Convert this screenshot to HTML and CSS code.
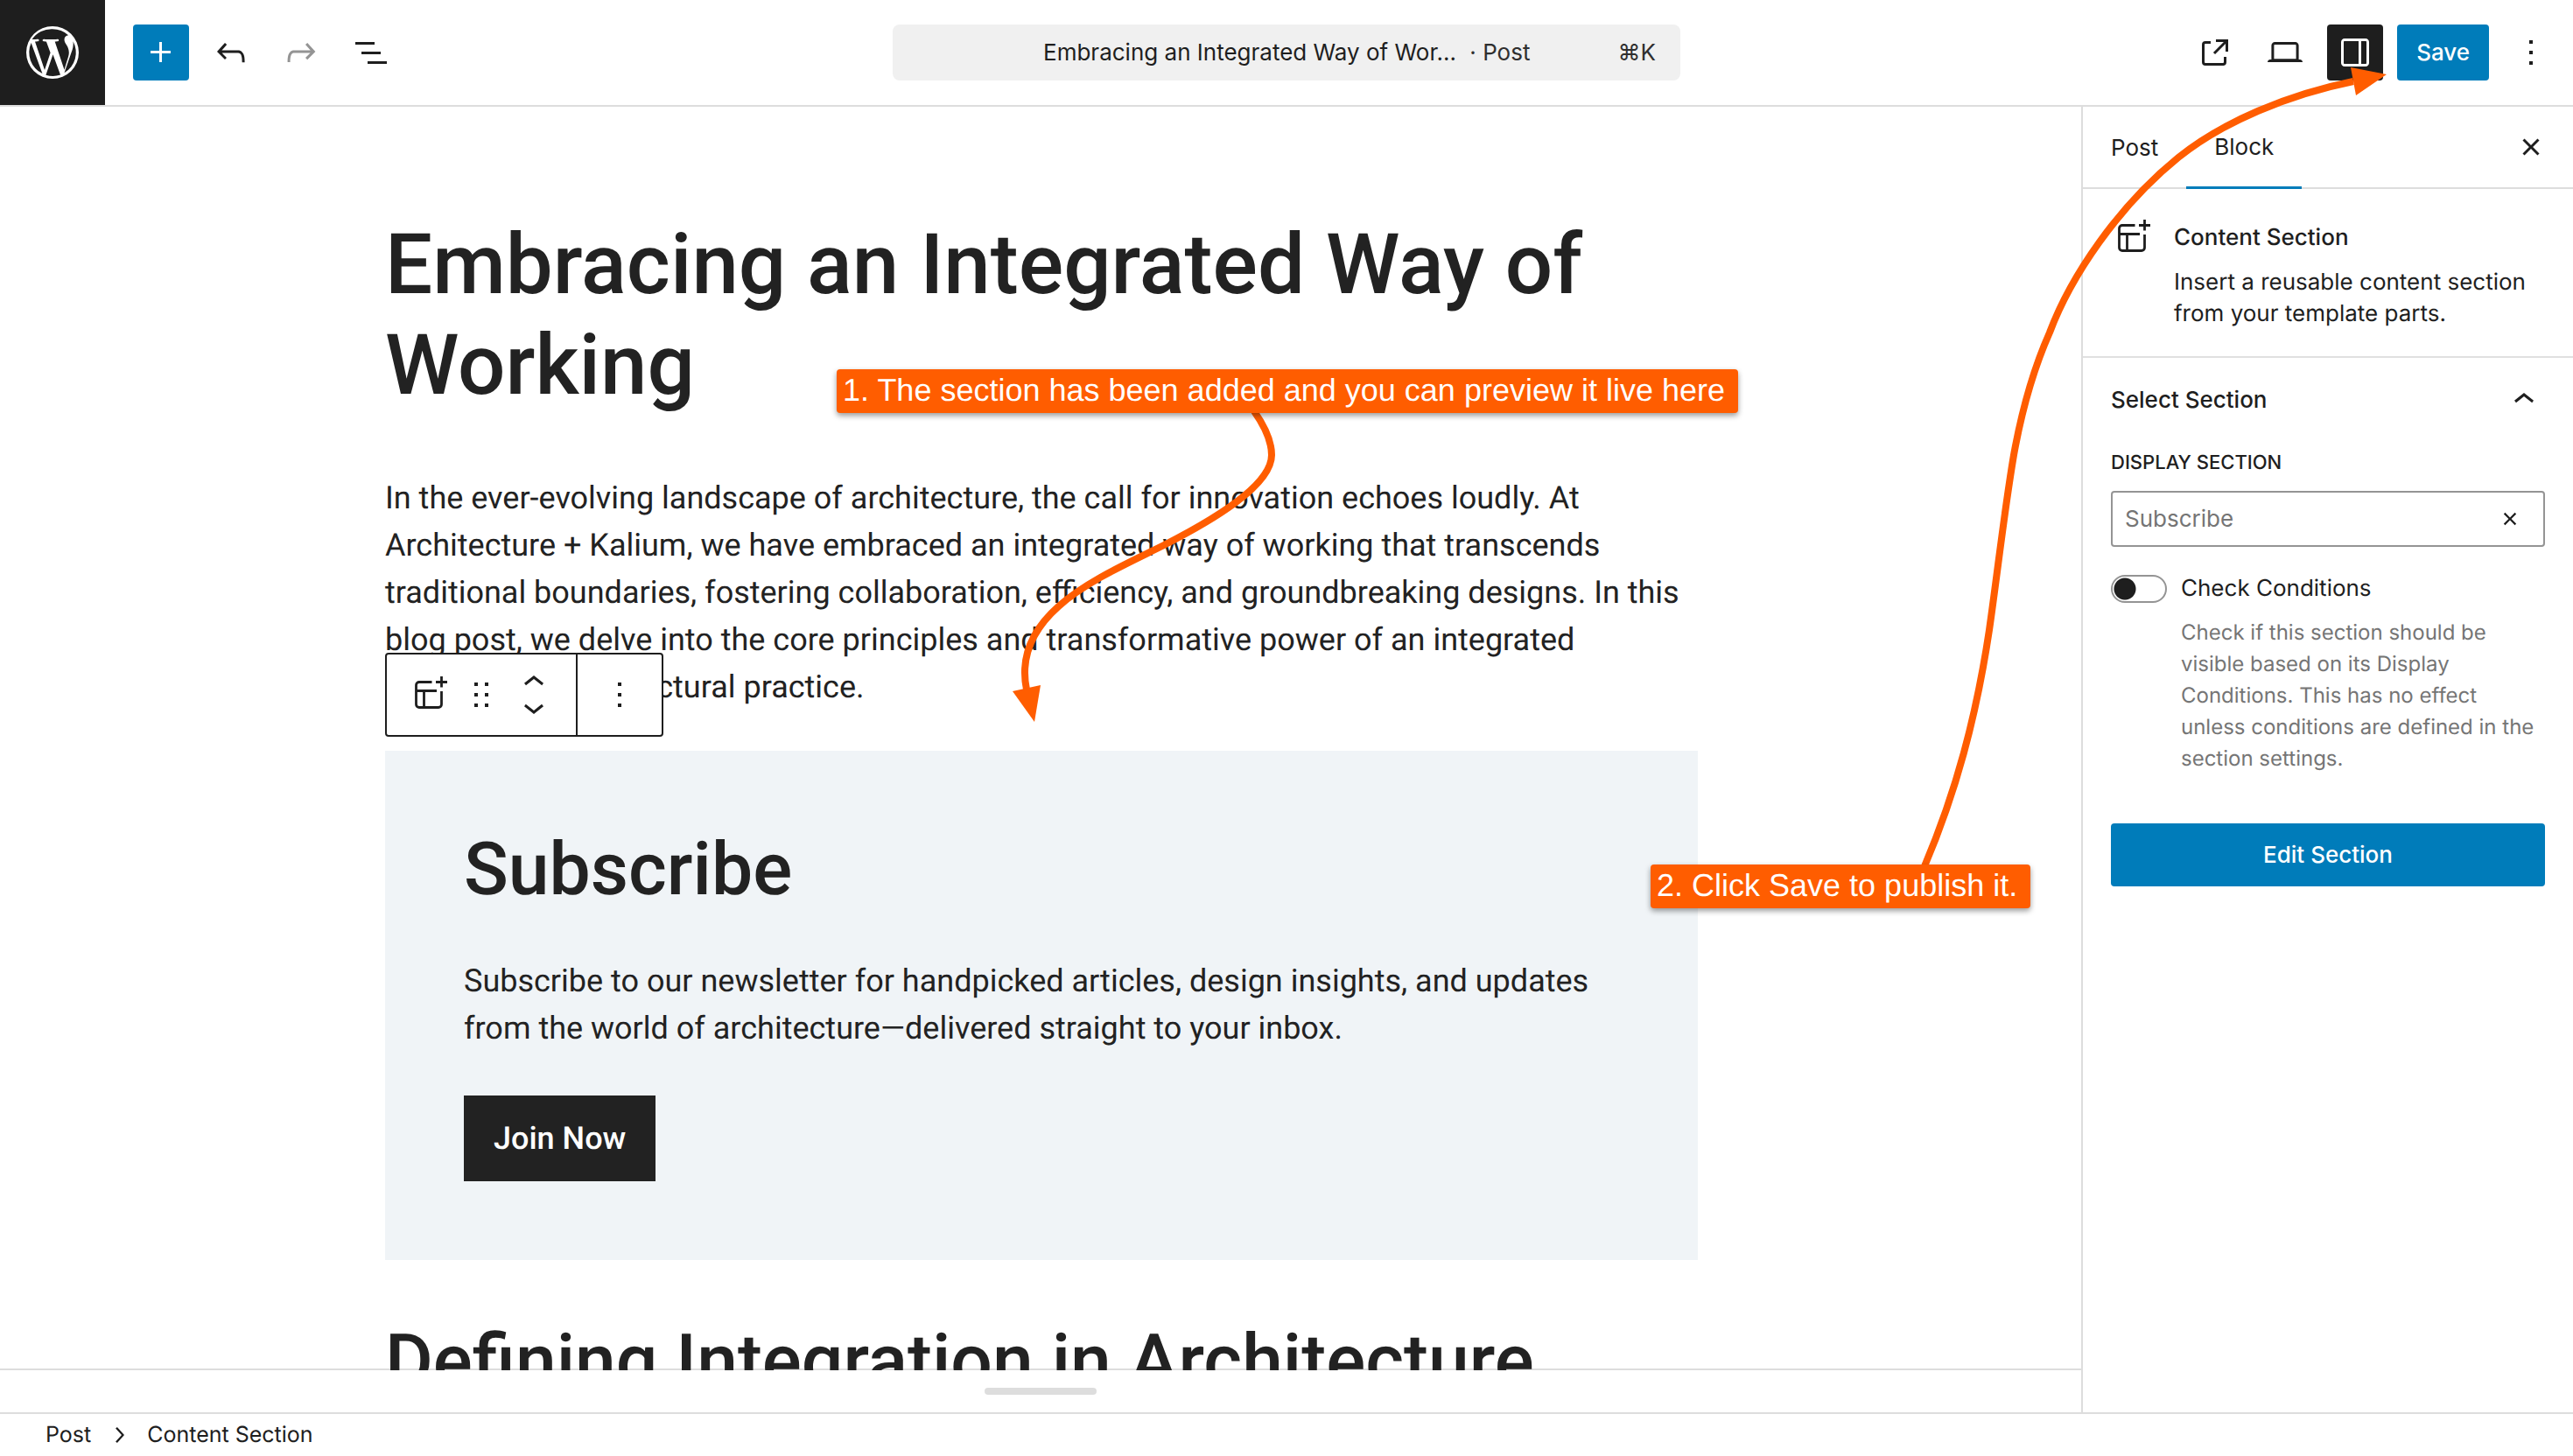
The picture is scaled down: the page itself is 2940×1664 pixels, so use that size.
FILE: index.html
```html
<!DOCTYPE html>
<html lang="en">
<head>
<meta charset="utf-8">
<title>Edit Post</title>
<link rel="stylesheet" href="styles.css">
</head>
<body>
<svg class="defs" aria-hidden="true">
  <symbol id="section-icon" viewBox="0 0 48 48">
    <path d="M27.500 9.500H13a3.500 3.500 0 0 0-3.500 3.500v22a3.500 3.500 0 0 0 3.500 3.500h22a3.500 3.500 0 0 0 3.500-3.500V20M9.500 19.500H33M18.500 19.500v19M38.500 3v12.500M32 9.500h13" fill="none" stroke="currentColor" stroke-width="2.800"/>
  </symbol>
</svg>
<div class="editor">
  <header class="topbar">
    <div class="tools">
      <a class="logo" href="#" aria-label="View posts">
        <svg viewBox="0 0 72 72" width="72" height="72">
          <path d="M36 6a30 30 0 1 0 0 60 30 30 0 0 0 0-60zm0 3.200a26.800 26.800 0 0 1 18.100 7c-2.600.2-4.600 2.300-4.600 5 0 2.400 1.400 4.400 2.900 6.800 1.100 2 2.400 4.500 2.400 8.200 0 2.500-1 5.500-2.300 9.600l-3 9.900-10.800-32.200c1.800-.1 3.400-.3 3.400-.3 1.600-.2 1.400-2.600-.2-2.500 0 0-4.900.4-8 .4-3 0-7.900-.4-7.900-.4-1.700-.1-1.900 2.400-.2 2.500 0 0 1.500.2 3.100.3l4.700 12.800-6.600 19.700-11-32.500c1.800-.1 3.500-.3 3.500-.3 1.600-.2 1.400-2.600-.2-2.500 0 0-3.700.3-6.700.4A26.800 26.800 0 0 1 36 9.200zM11.600 25.100l12.800 35a26.800 26.800 0 0 1-12.800-35zm47.900-1.900a26.800 26.800 0 0 1-10 36l8.200-23.700c1.500-3.800 2-6.900 2-9.600 0-1-.1-1.900-.2-2.700zM36.500 38.300l8.400 22.900.2.400a26.800 26.800 0 0 1-16.700.1z"/>
        </svg>
      </a>
      <button class="icon-btn primary" aria-label="Add block"><svg viewBox="0 0 24 24"><path d="M11 12.500V17.500H12.500V12.500H17.500V11H12.500V6H11V11H6V12.500H11Z"/></svg></button>
      <button class="icon-btn" aria-label="Undo"><svg viewBox="0 0 24 24"><path d="M18.300 11.700c-.6-.6-1.400-.9-2.300-.9H6.700l2.900-3.300-1.100-1-4.500 5L8.500 16l1-1-2.700-2.700H16c.5 0 .9.200 1.300.5 1 1 1 3.400 1 4.500v.3h1.500v-.2c0-1.500 0-4.300-1.500-5.700z"/></svg></button>
      <button class="icon-btn muted" aria-label="Redo"><svg viewBox="0 0 24 24"><path d="M15.600 6.500l-1.100 1 2.900 3.300H8c-.9 0-1.700.3-2.300.9-1.400 1.500-1.400 4.200-1.400 5.600v.2h1.500v-.3c0-1.100 0-3.500 1-4.500.3-.3.7-.5 1.300-.5h9.200L14.500 15l1.100 1.100 4.600-4.600-4.600-5z"/></svg></button>
      <button class="icon-btn" aria-label="Document overview"><svg viewBox="0 0 24 24"><path d="M3 6h11v1.500H3V6Zm3.500 5.500h11V13h-11v-1.500ZM21 17H10v1.500h11V17Z"/></svg></button>
    </div>
    <button class="command">
      <span class="command-title">Embracing an Integrated Way of Wor... <span class="kind">· Post</span></span>
      <span class="shortcut">⌘K</span>
    </button>
    <div class="actions">
      <button class="icon-btn" aria-label="View post"><svg viewBox="0 0 24 24"><path d="M19.500 4.500h-7V6h4.440l-5.970 5.970 1.060 1.060L18 7.060v4.440h1.500v-7Zm-13 1a2 2 0 0 0-2 2v10a2 2 0 0 0 2 2h10a2 2 0 0 0 2-2v-3H17v3a.5.5 0 0 1-.5.5h-10a.5.5 0 0 1-.5-.5v-10a.5.5 0 0 1 .5-.5h3V5.500h-3Z"/></svg></button>
      <button class="icon-btn" aria-label="Preview"><svg viewBox="0 0 24 24"><path d="M20.500 16h-.7V8c0-1.100-.9-2-2-2H6.200c-1.100 0-2 .9-2 2v8h-.7c-.8 0-1.500.7-1.500 1.500h20c0-.8-.7-1.500-1.500-1.500zM5.700 8c0-.3.200-.5.500-.5h11.600c.3 0 .5.200.5.500v7.600H5.700V8z"/></svg></button>
      <button class="icon-btn pressed" aria-label="Settings"><svg viewBox="0 0 24 24"><path fill-rule="evenodd" d="M18 4H6c-1.100 0-2 .9-2 2v12c0 1.100.9 2 2 2h12c1.100 0 2-.9 2-2V6c0-1.100-.9-2-2-2zm-4 14.500H6c-.3 0-.5-.2-.5-.5V6c0-.3.200-.5.500-.5h8v13zm4.500-.5c0 .3-.2.500-.5.500h-2.500v-13H18c.3 0 .5.200.5.500v12z"/></svg></button>
      <button class="save">Save</button>
      <button class="icon-btn" aria-label="Options"><svg viewBox="0 0 24 24"><path d="M13 19h-2v-2h2v2zm0-6h-2v-2h2v2zm0-6h-2V5h2v2z"/></svg></button>
    </div>
  </header>

  <div class="body">
    <div class="main">
      <main class="canvas">
        <article class="post">
          <h1>Embracing an Integrated Way of Working</h1>
          <p class="intro">In the ever-evolving landscape of architecture, the call for innovation echoes loudly. At Architecture + Kalium, we have embraced an integrated way of working that transcends traditional boundaries, fostering collaboration, efficiency, and groundbreaking designs. In this blog post, we delve into the core principles and transformative power of an integrated approach to architectural practice.</p>
          <section class="subscribe">
            <div class="block-toolbar" role="toolbar" aria-label="Block tools">
              <div class="group">
                <button class="tb-type" aria-label="Content Section"><svg viewBox="0 0 48 48"><use href="#section-icon"/></svg></button>
                <button class="tb-drag" aria-label="Drag"><svg viewBox="0 0 24 24"><path d="M8 7h2V5H8v2zm0 6h2v-2H8v2zm0 6h2v-2H8v2zm6-14v2h2V5h-2zm0 8h2v-2h-2v2zm0 6h2v-2h-2v2z"/></svg></button>
                <div class="movers">
                  <button aria-label="Move up"><svg viewBox="0 0 24 24"><path d="M6.500 12.400L12 8l5.500 4.400-.9 1.200L12 10l-4.500 3.600-1-1.200z"/></svg></button>
                  <button aria-label="Move down"><svg viewBox="0 0 24 24"><path d="M17.500 11.600L12 16l-5.500-4.400.9-1.200L12 14l4.500-3.600 1 1.200z"/></svg></button>
                </div>
              </div>
              <button class="tb-more" aria-label="Options"><svg viewBox="0 0 24 24"><path d="M13 19h-2v-2h2v2zm0-6h-2v-2h2v2zm0-6h-2V5h2v2z"/></svg></button>
            </div>
            <h2>Subscribe</h2>
            <p>Subscribe to our newsletter for handpicked articles, design insights, and updates from the world of architecture—delivered straight to your inbox.</p>
            <a class="join" href="#">Join Now</a>
          </section>
          <h2>Defining Integration in Architecture</h2>
        </article>
      </main>
      <div class="meta-drawer"><button class="handle" aria-label="Drag to resize"></button></div>
    </div>

    <aside class="sidebar">
      <div class="tabs">
        <button class="tab">Post</button>
        <button class="tab active">Block</button>
        <button class="icon-btn close" aria-label="Close settings"><svg viewBox="0 0 24 24"><path d="M12 13.060l3.712 3.713 1.061-1.060L13.061 12l3.712-3.712-1.060-1.060L12 10.938 8.288 7.227l-1.061 1.060L10.939 12l-3.712 3.712 1.060 1.061L12 13.061z"/></svg></button>
      </div>
      <div class="card">
        <svg class="card-icon" viewBox="0 0 48 48"><use href="#section-icon"/></svg>
        <div>
          <h2>Content Section</h2>
          <p>Insert a reusable content section from your template parts.</p>
        </div>
      </div>
      <div class="panel">
        <button class="panel-title">Select Section <svg viewBox="0 0 24 24"><path d="M6.500 12.400L12 8l5.500 4.400-.9 1.200L12 10l-4.500 3.600-1-1.200z"/></svg></button>
        <label class="field-label" for="section">Display Section</label>
        <div class="combo">
          <input id="section" type="text" placeholder="Subscribe">
          <button aria-label="Reset"><svg viewBox="0 0 24 24"><path d="M12 13.060l3.712 3.713 1.061-1.060L13.061 12l3.712-3.712-1.060-1.060L12 10.938 8.288 7.227l-1.061 1.060L10.939 12l-3.712 3.712 1.060 1.061L12 13.061z"/></svg></button>
        </div>
        <div class="toggle-row">
          <input class="toggle" id="conditions" type="checkbox" aria-describedby="conditions-help">
          <label for="conditions">Check Conditions</label>
        </div>
        <p class="help" id="conditions-help">Check if this section should be visible based on its Display Conditions. This has no effect unless conditions are defined in the section settings.</p>
        <button class="edit">Edit Section</button>
      </div>
    </aside>
  </div>

  <footer class="crumbs">
    <a href="#">Post</a>
    <svg viewBox="0 0 24 24"><path d="M10.600 6L9.400 7l4.600 5-4.600 5 1.200 1 5.400-6z"/></svg>
    <span>Content Section</span>
  </footer>

  <div class="notes">
    <svg class="arrows" viewBox="0 0 2940 1664" aria-hidden="true">
      <g class="lines">
        <path d="M1433 470C1445 487 1453 503 1453 520C1453 555 1385 595 1330 623C1258 659 1155 700 1173 788"/>
        <path d="M2199 990C2235 905 2258 820 2273 720C2283 650 2290 585 2301 520C2310 470 2322 425 2342 380C2366 316 2420 236 2489 180C2540 139 2615 108 2689 93"/>
      </g>
      <path class="head" d="M1157 790L1189 783L1182 825Z"/>
      <path class="head" d="M2686 77L2727 85L2692 109Z"/>
    </svg>
    <div class="note note-preview">1. The section has been added and you can preview it live here</div>
    <div class="note note-save">2. Click Save to publish it.</div>
  </div>
</div>
</body>
</html>
```
FILE: styles.css
```css
* { box-sizing: border-box; }

body {
  margin: 0;
  background: #fff;
  color: #1e1e1e;
  font: 26px/36px Inter, sans-serif;
  text-rendering: geometricPrecision;
}

button, input { font: inherit; color: inherit; }
button { margin: 0; padding: 0; border: 0; background: none; }
svg { display: block; fill: currentColor; }
h1, h2, p { margin: 0; }
a { color: inherit; text-decoration: none; }

.defs { position: absolute; width: 0; height: 0; }

.editor {
  position: relative;
  display: flex;
  flex-direction: column;
  height: 100vh;
  overflow: hidden;
}

/* Top bar */
.topbar {
  display: grid;
  grid-template-columns: 1fr 900px 1fr;
  align-items: center;
  flex: none;
  border-bottom: 2px solid #ddd;
}
.logo {
  display: grid;
  place-items: center;
  width: 120px;
  height: 120px;
  margin-right: 16px;
  background: #1e1e1e;
  color: #fff;
}
.tools, .actions { display: flex; align-items: center; gap: 16px; }
.actions { justify-content: flex-end; padding-right: 16px; }

.icon-btn {
  display: grid;
  place-items: center;
  width: 64px;
  height: 64px;
  border-radius: 4px;
}
.icon-btn svg { width: 48px; height: 48px; }
.icon-btn.primary { background: #007cba; color: #fff; }
.icon-btn.muted { color: #949494; }
.icon-btn.pressed { background: #1e1e1e; color: #fff; }

.command {
  display: grid;
  grid-template-columns: 1fr auto;
  align-items: center;
  height: 64px;
  padding: 0 28px;
  border-radius: 8px;
  background: #f0f0f0;
}
.command-title { padding-left: 44px; }
.kind { margin-left: 8px; }
.kind, .shortcut { color: #2f2f2f; }

.save {
  height: 64px;
  padding: 0 22px;
  border-radius: 4px;
  background: #007cba;
  color: #fff;
  font-weight: 500;
}

/* Canvas */
.body { display: flex; flex: 1; min-height: 0; }
.main { display: flex; flex: 1; flex-direction: column; min-width: 0; }
.canvas {
  flex: 1;
  min-height: 0;
  overflow: hidden;
  padding: 124px 0 0 2px;
  color: #222;
  font: 36px/54px Roboto, sans-serif;
  background: linear-gradient(#ddd, #ddd) bottom / 100% 2px no-repeat;
}
.post { max-width: 1500px; margin: 0 auto; }
.post h1 { font-size: 96px; line-height: 115px; font-weight: 500; }
.post h2 { font-size: 84px; line-height: 100px; font-weight: 500; }
.intro { margin: 66px 0 46px; }

.subscribe {
  position: relative;
  margin-bottom: 66px;
  padding: 86px 90px 90px;
  background: #f0f4f7;
}
.subscribe p { margin: 50px 0; }
.join {
  display: inline-block;
  padding: 22px 34px;
  background: #222;
  color: #fff;
  font-weight: 500;
  vertical-align: top;
}

.block-toolbar {
  position: absolute;
  left: 0;
  bottom: calc(100% + 16px);
  display: flex;
  height: 96px;
  border: 2px solid #1e1e1e;
  border-radius: 4px;
  background: #fff;
  color: #1e1e1e;
}
.group { display: flex; padding: 0 12px; border-right: 2px solid #1e1e1e; }
.block-toolbar button { display: flex; align-items: center; justify-content: center; }
.block-toolbar svg { flex: none; width: 48px; height: 48px; }
.tb-type { width: 72px; }
.tb-drag { width: 48px; }
.movers { display: flex; flex-direction: column; width: 72px; padding: 18px 0; }
.movers button { height: 28px; }
.tb-more { width: 96px; }

.meta-drawer { display: grid; justify-content: center; height: 48px; padding-top: 20px; background: #fff; }
.handle { width: 128px; height: 8px; border-radius: 4px; background: #ddd; }

/* Settings sidebar */
.sidebar { width: 562px; flex: none; border-left: 2px solid #ddd; }
.tabs { display: flex; height: 94px; border-bottom: 2px solid #ddd; padding-right: 16px; }
.tab { height: 94px; padding: 0 32px; }
.tab.active { border-bottom: 3px solid #007cba; }
.close { align-self: center; margin-left: auto; }

.card {
  display: grid;
  grid-template-columns: 48px 1fr;
  gap: 24px;
  padding: 32px 32px 30px;
  border-bottom: 2px solid #e0e0e0;
}
.card-icon { width: 48px; height: 48px; }
.card h2 { padding: 6px 0 15px; font-size: 26px; line-height: 36px; font-weight: 500; }

.panel { display: flex; flex-direction: column; padding: 0 32px; }
.panel-title {
  display: flex;
  align-items: center;
  justify-content: space-between;
  height: 96px;
  font-weight: 500;
}
.panel-title svg { width: 48px; height: 48px; }
.field-label {
  margin-bottom: 16px;
  padding-top: 8px;
  font-size: 22px;
  line-height: 32px;
  font-weight: 500;
  text-transform: uppercase;
}
.combo {
  display: flex;
  align-items: center;
  height: 64px;
  border: 2px solid #949494;
  border-radius: 4px;
  padding: 0 14px;
}
.combo input { flex: 1; min-width: 0; padding: 0; border: 0; outline: 0; background: none; }
.combo input::placeholder { color: #757575; opacity: 1; }
.combo button { padding: 0 6px; }
.combo svg { width: 36px; height: 36px; }

.toggle-row { display: flex; align-items: center; gap: 16px; margin-top: 30px; }
.toggle {
  appearance: none;
  width: 64px;
  height: 32px;
  margin: 0;
  border: 2px solid #949494;
  border-radius: 16px;
  background: radial-gradient(circle at 14px 14px, #1e1e1e 12px, transparent 13px) #fff;
}
.help { margin: 14px 0 56px 80px; color: #757575; font-size: 24px; line-height: 36px; }
.edit {
  height: 72px;
  border-radius: 4px;
  background: #007cba;
  color: #fff;
  font-weight: 500;
}

/* Breadcrumb */
.crumbs {
  display: flex;
  align-items: center;
  flex: none;
  height: 50px;
  border-top: 2px solid #ddd;
  padding-left: 52px;
  gap: 14px;
  font-size: 25px;
}
.crumbs svg { width: 36px; height: 36px; }

/* Callouts laid over the editor */
.notes { position: absolute; inset: 0; pointer-events: none; }
.arrows { width: 100%; height: 100%; }
.lines { fill: none; stroke: #ff5d00; stroke-width: 8; }
.head { fill: #ff5d00; }
.note {
  position: absolute;
  padding: 4px 15px 6px 7px;
  border-radius: 4px;
  background: #ff5d00;
  box-shadow: 0 3px 6px rgba(0, 0, 0, .4);
  color: #fff;
  font: 36px/40px "Liberation Sans", Arial, sans-serif;
  white-space: nowrap;
}
.note-preview { left: 956px; top: 422px; }
.note-save { left: 1886px; top: 988px; }
```
